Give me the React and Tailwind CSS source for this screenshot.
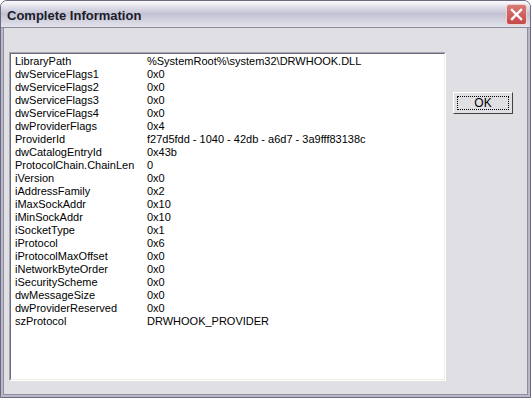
const rows = [
    ['LibraryPath', '%SystemRoot%\\system32\\DRWHOOK.DLL'],
    ['dwServiceFlags1', '0x0'],
    ['dwServiceFlags2', '0x0'],
    ['dwServiceFlags3', '0x0'],
    ['dwServiceFlags4', '0x0'],
    ['dwProviderFlags', '0x4'],
    ['ProviderId', 'f27d5fdd - 1040 - 42db - a6d7 - 3a9fff83138c'],
    ['dwCatalogEntryId', '0x43b'],
    ['ProtocolChain.ChainLen', '0'],
    ['iVersion', '0x0'],
    ['iAddressFamily', '0x2'],
    ['iMaxSockAddr', '0x10'],
    ['iMinSockAddr', '0x10'],
    ['iSocketType', '0x1'],
    ['iProtocol', '0x6'],
    ['iProtocolMaxOffset', '0x0'],
    ['iNetworkByteOrder', '0x0'],
    ['iSecurityScheme', '0x0'],
    ['dwMessageSize', '0x0'],
    ['dwProviderReserved', '0x0'],
    ['szProtocol', 'DRWHOOK_PROVIDER'],
];

export default function App() {
    return (
        <div className="w-[531px] h-[398px] bg-[#e0dfe3] flex flex-col overflow-hidden rounded-t-[7px] border border-[#6b6a80] font-['Liberation_Sans',Arial,sans-serif]">
            {/* Title bar */}
            <div className="h-[27px] shrink-0 flex items-center justify-between pl-[6px] pr-[3px] bg-gradient-to-b from-[#fbfbfd] via-[#c2c2d4] to-[#e4e4ec] border-b border-[#8a899e]">
                <span className="pt-[4px] text-[13px] font-bold text-[#1c1c2a]">Complete Information</span>
                <div className="mt-[1px] w-[21px] h-[21px] rounded-[3px] border border-[#f2d0cc] bg-gradient-to-b from-[#d97a74] to-[#c4494a] flex items-center justify-center">
                    <svg width="13" height="13" viewBox="0 0 13 13">
                        <path d="M2 2 L11 11 M11 2 L2 11" stroke="#fff" strokeWidth="2.4" strokeLinecap="square" />
                    </svg>
                </div>
            </div>

            {/* Body */}
            <div className="flex-1 flex border-x-[2px] border-b-[2px] border-[#b9b8c9]">
                <div className="flex-1 flex pl-[5px] pt-[24px] pb-[13px] pr-[6px] border-x border-b border-[#8e8da2]">
                    {/* List box */}
                    <div className="w-[437px] h-[329px] border-t border-l border-[#a6a5aa] border-r border-b border-r-white border-b-white">
                        <div className="w-full h-full bg-white border-t border-l border-[#6b6a80] border-r border-b border-r-[#f1efe2] border-b-[#f1efe2] pt-[1px] pl-[4px] text-[11px] leading-[13px] text-black">
                            {rows.map(([k, v]) => (
                                <div key={k} className="flex h-[13px] whitespace-nowrap">
                                    <span className="w-[132px] shrink-0">{k}</span>
                                    <span>{v}</span>
                                </div>
                            ))}
                        </div>
                    </div>

                    {/* Buttons */}
                    <div className="flex-1 flex flex-col items-end pt-[40px] pr-[8px]">
                        <button className="w-[60px] h-[22px] box-border bg-[#e0dfe3] border-t border-l border-white border-r border-b border-r-[#404040] border-b-[#404040] p-[3px]">
                            <div className="w-full h-full border border-dotted border-black flex items-center justify-center text-[12px] text-black leading-none">
                                OK
                            </div>
                        </button>
                    </div>
                </div>
            </div>
        </div>
    );
}
